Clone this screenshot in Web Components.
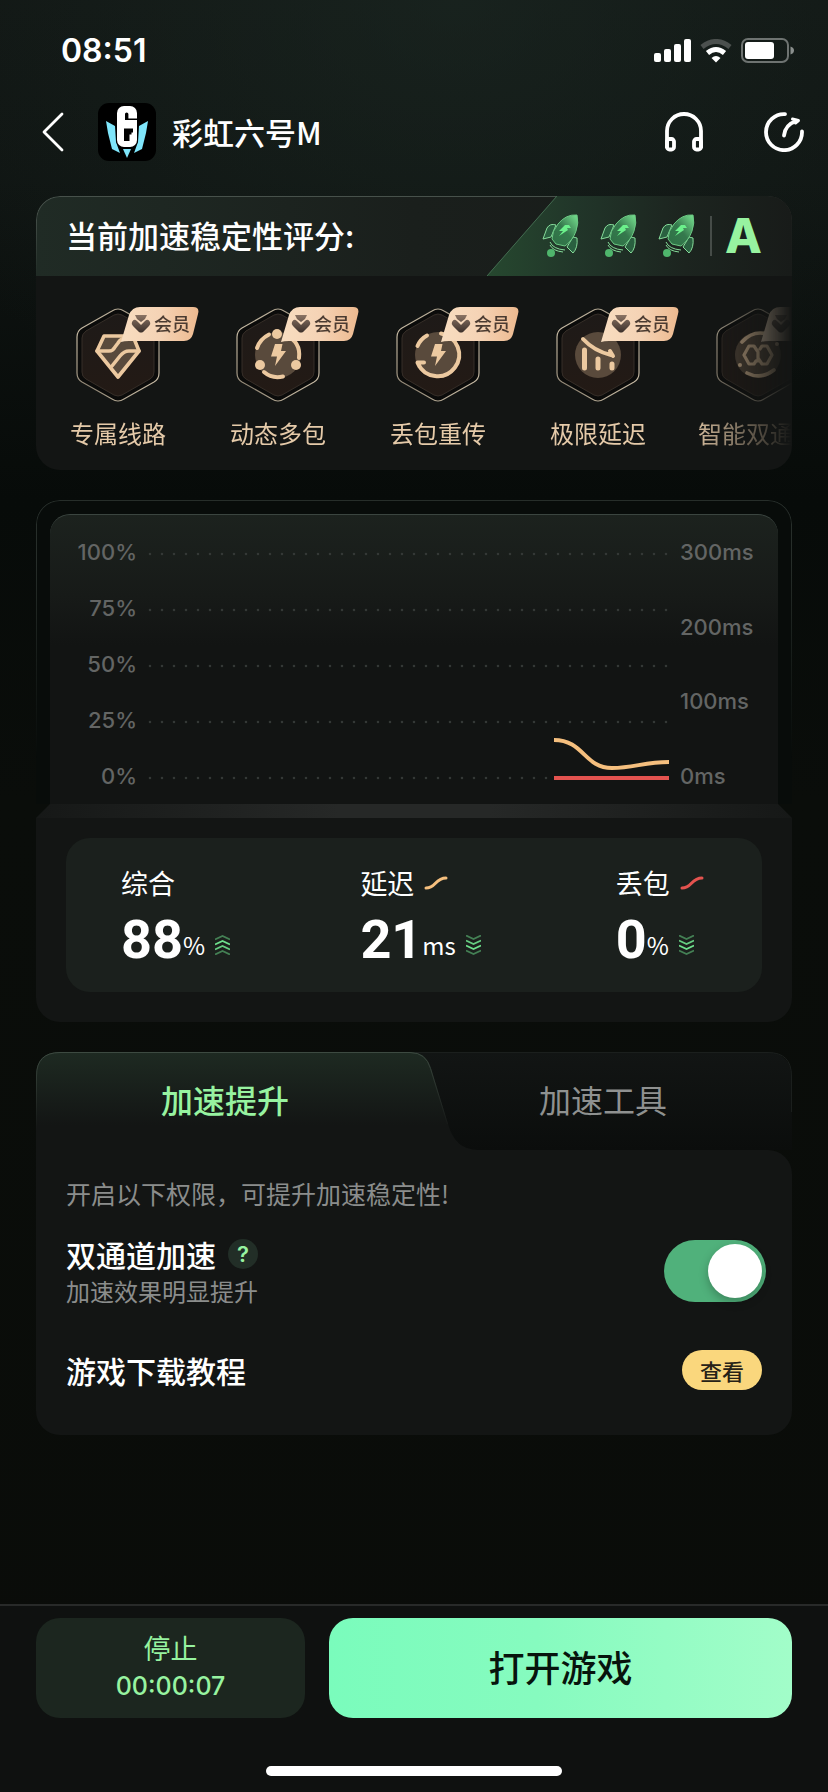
<!DOCTYPE html>
<html lang="zh-CN">
<head>
<meta charset="utf-8">
<meta name="viewport" content="width=device-width, initial-scale=1">
<title>彩虹六号M</title>
<style>
    :root {
        --cjk: "Noto Sans CJK SC", "Noto Sans", sans-serif;
        --latin: Inter, "Noto Sans CJK SC", sans-serif;
        --surface: #131514;
        --surface-raised: #1b201d;
        --green: #97f3a0;
        --gold: #ecc9a0;
        --muted: #8b8d8c;
        --radius: 24px;
        --side: 36px;
    }
    * { box-sizing: border-box; }
    body {
        margin: 0;
        min-height: 100vh;
        display: flex;
        flex-direction: column;
        font-family: var(--cjk);
        color: #fff;
        background:
            radial-gradient(ellipse 75% 460px at 55% 0, rgba(30, 44, 38, 0.55), rgba(30, 44, 38, 0) 100%),
            linear-gradient(#111614 0, #0f1412 180px, #070b09 500px, #0a0d0a 800px, #0a0c09 100%);
    }
    main {
        display: flex;
        flex-direction: column;
        gap: 30px;
        padding: 20px var(--side) 40px;
    }
    bottom-bar { margin-top: auto; }
</style>
</head>
<body>
    <status-bar time="08:51"></status-bar>
    <app-header>彩虹六号M</app-header>
    <main>
        <score-card heading="当前加速稳定性评分:" grade="A" rockets="3">
            <perk-item icon="gem">专属线路</perk-item>
            <perk-item icon="multi">动态多包</perk-item>
            <perk-item icon="resend">丢包重传</perk-item>
            <perk-item icon="drop">极限延迟</perk-item>
            <perk-item icon="link">智能双通道</perk-item>
        </score-card>
        <network-card>
            <latency-chart></latency-chart>
            <stat-item slot="stats" value="88" unit="%" trend="up">综合</stat-item>
            <stat-item slot="stats" value="21" unit="ms" trend="down" line="#f5bf7e">延迟</stat-item>
            <stat-item slot="stats" value="0" unit="%" trend="down" line="#e4534f">丢包</stat-item>
        </network-card>
        <boost-tabs first="加速提升" second="加速工具">
            <p>开启以下权限，可提升加速稳定性!</p>
            <setting-row kind="switch" heading="双通道加速" sub="加速效果明显提升"></setting-row>
            <setting-row kind="action" heading="游戏下载教程" action="查看"></setting-row>
        </boost-tabs>
    </main>
    <bottom-bar elapsed="00:00:07" stop="停止">打开游戏</bottom-bar>

<script>
const BASE = `
    * { box-sizing: border-box; }
    button { font: inherit; color: inherit; background: none; border: 0; padding: 0; margin: 0; cursor: pointer; }
    svg { display: block; }
`;

class BaseElement extends HTMLElement {
    constructor() {
        super();
        this.attachShadow({ mode: 'open' });
    }

    connectedCallback() {
        this.shadowRoot.innerHTML = `<style>${BASE}${this.styles()}</style>${this.markup()}`;
    }

    attr(name) { return this.getAttribute(name) || ''; }
    styles() { return ''; }
    markup() { return '<slot></slot>'; }
}

class StatusBar extends BaseElement {
    styles() {
        return `
            :host { display: flex; align-items: center; justify-content: space-between; height: 88px; padding: 13px 34px 0 61px; }
            .time { font: 600 32px/40px var(--latin); }
            .icons { display: flex; align-items: center; gap: 9px; }
        `;
    }

    markup() {
        return `
            <span class="time">${this.attr('time')}</span>
            <div class="icons">
                <svg width="37" height="24" viewBox="0 0 37 24" fill="#fff">
                    <rect x="0" y="14" width="7" height="9" rx="2"/><rect x="10" y="10" width="7" height="13" rx="2"/>
                    <rect x="20" y="5" width="7" height="18" rx="2"/><rect x="30" y="0" width="7" height="23" rx="2"/>
                </svg>
                <svg width="32" height="24" viewBox="0 0 32 24" fill="none" stroke-width="5">
                    <path d="M2 8Q16-3 30 8" stroke="#4b504e"/>
                    <path d="M7.500 14Q16 7 24.500 14" stroke="#fff"/>
                    <path d="M11.500 19Q16 15 20.500 19L16 23.500Z" fill="#fff"/>
                </svg>
                <svg width="53" height="26" viewBox="0 0 53 26">
                    <rect x="1" y="1" width="46" height="23" rx="6" fill="none" stroke="#6e7371" stroke-width="2"/>
                    <rect x="4" y="4" width="29" height="17" rx="3" fill="#fff"/>
                    <path d="M49.500 8.500q3.500 1.200 3.500 4t-3.500 4z" fill="#8a8f8d"/>
                </svg>
            </div>
        `;
    }
}

class AppHeader extends BaseElement {
    styles() {
        return `
            :host { display: flex; align-items: center; height: 88px; padding: 0 24px 0 42px; }
            .back { width: 22px; margin-right: 34px; }
            h1 { flex: 1; margin: 0 0 0 16px; font-size: 31px; line-height: 44px; font-weight: 500; }
            .tools { display: flex; gap: 60px; }
        `;
    }

    markup() {
        return `
            <button class="back" aria-label="返回">
                <svg width="22" height="40" viewBox="0 0 22 40" fill="none" stroke="#fff" stroke-width="2.800" stroke-linecap="round" stroke-linejoin="round"><path d="M20 2 2 20l18 18"/></svg>
            </button>
            <svg width="58" height="58" viewBox="0 0 58 58">
                <rect width="58" height="58" rx="11" fill="#000"/>
                <g fill="#7fe6fb">
                    <path d="M8 18l9 5 1 16 4 11-8-4-4-16z"/><path d="M50 18l-9 5-1 16-4 11 8-4 4-16z"/><path d="M25 46h8l-4 9z"/>
                </g>
                <rect x="18" y="2" width="22" height="43" rx="8" fill="#000"/>
                <rect x="19" y="3" width="20" height="41" rx="7" fill="#fff"/>
                <path d="M27 11q0-1.500 1.700-1.500t1.700 1.500v4.500H39v1.600h-8.600H27zM26 25.500h9v4h-1.500v2h-2v6.500H26z" fill="#000"/>
            </svg>
            <h1><slot></slot></h1>
            <div class="tools">
                <button aria-label="客服">
                    <svg width="40" height="40" viewBox="0 0 40 40" fill="none" stroke="#fff" stroke-width="3.800">
                        <path d="M3 36V19a17 17 0 0 1 34 0v17"/>
                        <rect x="3" y="27" width="7" height="10.500" rx="2.500"/><rect x="30" y="27" width="7" height="10.500" rx="2.500"/>
                    </svg>
                </button>
                <button aria-label="测速">
                    <svg width="40" height="40" viewBox="0 0 40 40" fill="none" stroke="#fff" stroke-width="3.800" stroke-linecap="round" stroke-linejoin="round">
                        <path d="M21 2.200A18 18 0 1 0 38 19.500"/>
                        <path d="M20 23.500Q21 13 32 9"/><path d="M28.500 7l6 1.500-3 2.500" stroke-width="3"/>
                    </svg>
                </button>
            </div>
        `;
    }
}

const ROCKET = `
    <svg width="38" height="46" viewBox="0 0 38 46" stroke="#86dc9a" stroke-width="1" stroke-linejoin="round">
        <path d="M14 12Q8 10 5 15L1 26l8-2zM25 34l6 6q5-5 4-15l-4-1z" fill="#2a6040"/>
        <path d="M35 2Q24 1 16 11 10 18 10 26l4 5 9 2q8-6 11-15 3-8 1-16z" fill="url(#body)" stroke="#6cc984"/>
        <path d="M8 29q3 7 15 8M8 32q3 6 13 7" fill="none"/>
        <circle cx="9" cy="40" r="4" fill="#4fb56c" stroke="none"/>
        <path d="M23 12l-6 6h4l-4 5 9-6-1-2h4l-2-3z" fill="#6bf08b" stroke="none"/>
    </svg>
`;

class ScoreCard extends BaseElement {
    styles() {
        return `
            :host { display: block; border-radius: var(--radius); background: var(--surface); overflow: hidden; }
            header {
                position: relative; display: flex; align-items: stretch; height: 80px;
                background: linear-gradient(90deg, #202b25 0, #1a1f1c 50%, #181b19 100%);
            }
            header::before {
                content: ""; position: absolute; inset: 0; border: 1px solid #47514b; border-bottom: 0;
                border-radius: var(--radius) var(--radius) 0 0; -webkit-mask-image: linear-gradient(#000 20%, transparent);
            }
            h2 { flex: 1; margin: 0; padding-left: 30px; font-size: 31px; line-height: 78px; font-weight: 500; }
            .grade { position: relative; display: flex; align-items: center; gap: 20px; padding: 0 30px 0 55px; }
            .slant { position: absolute; top: 0; left: 0; width: 100%; height: 100%; }
            .rockets, .grade b { position: relative; }
            .rockets { display: flex; gap: 20px; }
            .bar { position: relative; width: 2px; height: 40px; margin-left: -6px; background: #464c48; }
            .grade b { margin-left: -7px; font: 800 48px/80px var(--latin); color: var(--green); }
            .perks {
                display: flex; gap: 56px; padding: 32px 30px 20px; overflow: hidden;
                -webkit-mask-image: linear-gradient(90deg, #000 calc(100% - 104px), transparent 100%);
            }
            svg.defs { position: absolute; width: 0; height: 0; }
        `;
    }

    markup() {
        const rockets = ROCKET.repeat(Number(this.attr('rockets')));
        return `
            <svg class="defs"><defs>
                <linearGradient id="body" x1="1" y1="0" x2="0" y2="1">
                    <stop offset="0" stop-color="#78e391"/><stop offset=".5" stop-color="#35794d"/><stop offset="1" stop-color="#2e7045"/>
                </linearGradient>
            </defs></svg>
            <header>
                <h2>${this.attr('heading')}</h2>
                <div class="grade">
                    <svg class="slant" viewBox="0 0 305 80" preserveAspectRatio="none">
                        <defs><linearGradient id="slant">
                            <stop offset="0" stop-color="#26482f"/><stop offset=".3" stop-color="#213529"/>
                            <stop offset=".65" stop-color="#1c241f"/><stop offset="1" stop-color="#181b19"/>
                        </linearGradient></defs>
                        <path d="M70 0H305V80H0z" fill="url(#slant)"/><path d="M70 0 0 80" stroke="#436c50"/>
                    </svg>
                    <div class="rockets">${rockets}</div>
                    <span class="bar"></span>
                    <b>${this.attr('grade')}</b>
                </div>
            </header>
            <div class="perks"><slot></slot></div>
        `;
    }
}

// glyphs drawn inside the 84x94 hexagon, centred on 42,47
const DISC = '<circle cx="42" cy="47" r="23" fill="#594a3c" stroke="none"/>';
const BOLT = '<path d="M39 36h7.500l-1.500 7h5L39 58l2-9.500h-6z" fill="#ecc9a0" stroke="none"/>';
const PERK_ICONS = {
    gem: `
        <path d="M28 28h29l6 15-21 26-21-26z" fill="#594a3c" stroke-width="3.600"/>
        <path d="M21 43h12q4 0 6-4l3-4q3-5 8-5M36 58l8-10q4-5 9-5h10" stroke-width="3.600"/>
    `,
    multi: `${DISC}${BOLT}
        <path d="M21 40q3-9 12-13.500M50 27.500Q65 34 63 50M28 64q8 7 19 4.500" stroke-width="4"/>
        <g fill="#ecc9a0" stroke="none"><circle cx="41" cy="26" r="5"/><circle cx="60" cy="57" r="5"/><circle cx="24" cy="57" r="5"/></g>
    `,
    resend: `${DISC}${BOLT}
        <path d="M21.500 38q3-7 9.500-10.500M45 25.500a21.500 21.500 0 1 1-23 30M28 54.500h-6.500l2 4" stroke-width="4"/>
    `,
    drop: `${DISC}
        <path d="M28.500 42v18M42 51v9M56 56v4" stroke-width="5"/>
        <path d="M27 31q11 12 28 16M54 43l3 5" stroke-width="4"/>
    `,
    link: `${DISC}
        <path d="M26 34q11-12 25-8M31 65q14 7 27-3" stroke-width="3.600"/>
        <path d="M40 53l-2 3h-5l-5-9 5-9h5l4 6v9M44 41l2-3h5l5 9-5 9h-5l-4-6v-6" stroke-width="3.200"/>
        <g fill="#ecc9a0" stroke="none"><circle cx="61" cy="36" r="2"/><circle cx="24" cy="57" r="2"/></g>
    `
};

class PerkItem extends BaseElement {
    styles() {
        return `
            :host { display: flex; flex: none; flex-direction: column; align-items: center; gap: 14px; width: 104px; }
            .icon { position: relative; width: 84px; height: 94px; }
            .badge { position: absolute; left: 45px; top: -1px; width: 78px; height: 35px; padding-left: 33px; font-size: 18px; line-height: 32px; font-weight: 500; color: #4b3b31; }
            .badge svg { position: absolute; left: 0; top: 0; }
            .badge span { position: relative; }
            .label { font-size: 24px; line-height: 34px; white-space: nowrap; color: #e5caa9; }
        `;
    }

    markup() {
        return `
            <div class="icon">
                <svg width="84" height="94" viewBox="0 0 84 94" fill="none">
                    <defs>
                        <linearGradient id="rim" x2="1" y2="1"><stop offset="0" stop-color="#d9ccb4"/><stop offset=".5" stop-color="#8c8271"/><stop offset="1" stop-color="#d9ccb4"/></linearGradient>
                        <linearGradient id="core" x2="0" y2="1"><stop offset="0" stop-color="#1e1a18"/><stop offset="1" stop-color="#231a15"/></linearGradient>
                    </defs>
                    <path d="M36 3q6-4 12 0l30 17q5 3 5 9v36q0 6-5 9L48 91q-6 4-12 0L6 74q-5-3-5-9V29q0-6 5-9z" fill="#0b0b0a" stroke="url(#rim)" stroke-width="1.200"/>
                    <path d="M38 7q4-2 8 0l28 16q4 3 4 7v34q0 5-4 7L46 87q-4 2-8 0L10 71q-4-2-4-7V30q0-4 4-7z" fill="url(#core)" stroke="#362e28"/>
                    <g stroke="#ecc9a0" stroke-linecap="round" stroke-linejoin="round">${PERK_ICONS[this.attr('icon')]}</g>
                </svg>
                <div class="badge">
                    <svg width="78" height="35" viewBox="0 0 78 35">
                        <defs>
                            <linearGradient id="plate"><stop offset="0" stop-color="#f8ddc0"/><stop offset=".5" stop-color="#f5d3b5"/><stop offset="1" stop-color="#edb98f"/></linearGradient>
                            <linearGradient id="vee" x2="0" y2="1"><stop offset="0" stop-color="#8b7464"/><stop offset="1" stop-color="#3c302b"/></linearGradient>
                        </defs>
                        <path d="M0 35 8 8Q11 0 19 0h53q7 0 5 7l-5 20q-2 7-9 7H8Q3 34 0 35z" fill="url(#plate)"/>
                        <path d="M14 8h12l-2 4-4 3-4-3zM11 15q2-4 5-1l4 4 4-4q3-3 5 1 1 2-1 4l-6 6q-2 1-4 0l-6-6q-2-2-1-4z" fill="url(#vee)"/>
                    </svg>
                    <span>会员</span>
                </div>
            </div>
            <span class="label"><slot></slot></span>
        `;
    }
}

class NetworkCard extends BaseElement {
    styles() {
        return `
            :host { display: block; }
            .frame { position: relative; padding: 14px 14px 0; background: #080c0a; border-radius: var(--radius) var(--radius) 0 0; }
            .frame::before {
                content: ""; position: absolute; inset: 0; border: 1px solid #272e2a; border-bottom: 0;
                border-radius: var(--radius) var(--radius) 0 0; -webkit-mask-image: linear-gradient(#000 20%, transparent 85%);
            }
            .bevel {
                height: 14px; background: linear-gradient(90deg, #161817, #262827 40%, #262827 60%, #161817);
                clip-path: polygon(14px 0, calc(100% - 14px) 0, 100% 100%, 0 100%);
            }
            .body { padding: 20px 30px 30px; background: var(--surface); border-radius: 0 0 var(--radius) var(--radius); }
            .stats {
                display: grid; grid-template-columns: 239fr 255fr 118fr; padding: 27px 28px 27px 55px;
                background: var(--surface-raised); border-radius: var(--radius);
            }
        `;
    }

    markup() {
        return `
            <div class="frame"><slot></slot></div>
            <div class="bevel"></div>
            <div class="body"><div class="stats"><slot name="stats"></slot></div></div>
        `;
    }
}

class LatencyChart extends BaseElement {
    styles() {
        return `
            :host {
                display: grid; grid-template-columns: 87px 1fr 109px; height: 290px; padding: 23px 0 14px;
                border-radius: 20px 20px 0 0; border-top: 1px solid #3b4540;
                background: linear-gradient(#1c221e, #171a18 28%, #121413 45%);
                font: 500 22px/28px var(--latin); color: #636564;
            }
            .axis { display: flex; flex-direction: column; justify-content: space-between; }
            .left { text-align: right; }
            .plot { width: 100%; height: 252px; padding-left: 7px; }
            .right { padding-left: 11px; }
        `;
    }

    markup() {
        const left = ['100%', '75%', '50%', '25%', '0%'];
        const right = ['300ms', '200ms', '100ms', '0ms'];
        const dots = left.map((_, i) => `<path d="M6 ${16 + i * 56}H524" stroke="#343836" stroke-width="2.600" stroke-dasharray="0 12"/>`);
        return `
            <div class="axis left">${left.map(t => `<span>${t}</span>`).join('')}</div>
            <svg class="plot" viewBox="0 0 525 252" preserveAspectRatio="xMaxYMid meet" fill="none" overflow="visible">
                <g stroke-linecap="round">${dots.join('')}</g>
                <path d="M410 240H525" stroke="#e4534f" stroke-width="4"/>
                <path d="M410 202C440 202 440 230 468 230C490 230 500 224 525 224" stroke="#f5bf7e" stroke-width="4"/>
            </svg>
            <div class="axis right">${right.map(t => `<span>${t}</span>`).join('')}</div>
        `;
    }
}

class StatItem extends BaseElement {
    styles() {
        return `
            :host { display: flex; flex-direction: column; gap: 14px; }
            .name { display: flex; align-items: center; gap: 10px; font-size: 27px; line-height: 36px; }
            .value { display: flex; align-items: flex-end; }
            b { font: 700 54px/50px Roboto, var(--cjk); }
            .unit { font-size: 24px; line-height: 40px; }
            .trend { margin: 0 0 10px 10px; }
            .down { transform: scaleY(-1); }
        `;
    }

    markup() {
        const line = this.attr('line');
        const mark = line ? `<svg width="24" height="16" viewBox="0 0 24 16" fill="none" stroke="${line}" stroke-width="3" stroke-linecap="round"><path d="M2 13c10 0 9-10 20-10"/></svg>` : '';
        return `
            <div class="name"><slot></slot>${mark}</div>
            <div class="value">
                <b>${this.attr('value')}</b><span class="unit">${this.attr('unit')}</span>
                <svg class="trend ${this.attr('trend')}" width="15" height="20" viewBox="0 0 15 20" fill="none" stroke="#6ee08c" stroke-width="1.800">
                    <path d="M0 4.500 7.500 1 15 4.500" opacity=".5"/><path d="M0 9.500 7.500 6 15 9.500"/>
                    <path d="M0 14.500 7.500 11 15 14.500" opacity=".9"/><path d="M0 19.500 7.500 16 15 19.500" opacity=".5"/>
                </svg>
            </div>
        `;
    }
}

class BoostTabs extends BaseElement {
    styles() {
        return `
            :host { display: block; }
            .tabs { position: relative; display: flex; background: linear-gradient(#121514, #0b0d0c); border-radius: var(--radius) var(--radius) 0 0; }
            .shape { position: absolute; width: 100%; height: 100%; }
            button { position: relative; flex: 1; height: 98px; padding-bottom: 4px; font-size: 32px; line-height: 48px; color: #8f9190; }
            button[aria-selected=true] { font-weight: 500; color: var(--green); }
            .panel {
                display: flex; flex-direction: column; padding: 26px 26px 45px 30px;
                background: var(--surface); border-radius: 0 var(--radius) var(--radius) var(--radius);
            }
            ::slotted(p) { margin: 0 0 24px; font-size: 25px; line-height: 34px; color: var(--muted); }
            ::slotted(setting-row:last-child) { margin-top: 42px; }
        `;
    }

    markup() {
        return `
            <div class="tabs" role="tablist">
                <svg class="shape" viewBox="0 0 756 98" preserveAspectRatio="none" fill="none">
                    <defs>
                        <linearGradient id="tab" x2="0" y2="1"><stop offset="0" stop-color="#1e2a22"/><stop offset=".75" stop-color="#131514"/></linearGradient>
                        <linearGradient id="edge" x2="0" y2="1"><stop offset="0" stop-color="#3d4a41"/><stop offset=".8" stop-color="#131514"/></linearGradient>
                    </defs>
                    <path d="M380 .5H732Q755.500 .5 755.500 24V60" stroke="#1b1f1d"/>
                    <path d="M0 98V24Q0 0 24 0H374q16 0 21 16L412 72q7 26 30 26z" fill="url(#tab)"/>
                    <path d="M.5 98V24Q.5 .5 24 .5H374q16 0 20.500 16L411.500 72" stroke="url(#edge)"/>
                </svg>
                <button role="tab" aria-selected="true">${this.attr('first')}</button>
                <button role="tab" aria-selected="false">${this.attr('second')}</button>
            </div>
            <div class="panel" role="tabpanel"><slot></slot></div>
        `;
    }
}

class SettingRow extends BaseElement {
    styles() {
        return `
            :host { display: flex; align-items: center; justify-content: space-between; }
            .title { display: flex; align-items: center; gap: 12px; font-size: 30px; line-height: 40px; font-weight: 500; }
            .sub { font-size: 24px; line-height: 34px; color: var(--muted); }
            .help { width: 30px; height: 30px; border-radius: 50%; background: #222e27; font: 600 22px/30px var(--latin); color: var(--green); }
            input { appearance: none; position: relative; width: 102px; height: 62px; margin: 0; border-radius: 31px; background: #3a3d3b; cursor: pointer; }
            input::before { content: ""; position: absolute; left: 4px; top: 4px; width: 54px; height: 54px; border-radius: 50%; background: #fff; box-shadow: 0 4px 10px rgba(0, 0, 0, 0.25); }
            input:checked { background: #50b17b; }
            input:checked::before { left: 44px; }
            .action { width: 80px; height: 40px; margin-right: 4px; border-radius: 20px; background: #fad77d; font-size: 22px; line-height: 38px; font-weight: 500; color: #272217; }
        `;
    }

    markup() {
        if (this.attr('kind') === 'switch') {
            return `
                <div>
                    <div class="title"><label for="toggle">${this.attr('heading')}</label><button class="help" aria-label="说明">?</button></div>
                    <div class="sub">${this.attr('sub')}</div>
                </div>
                <input id="toggle" type="checkbox" role="switch" checked>
            `;
        }
        return `
            <div class="title" id="name">${this.attr('heading')}</div>
            <button class="action" aria-describedby="name">${this.attr('action')}</button>
        `;
    }
}

class BottomBar extends BaseElement {
    styles() {
        return `
            :host { display: block; border-top: 2px solid #282a29; background: #0f1110; }
            .actions { display: flex; gap: 24px; padding: 12px var(--side) 48px; }
            button { height: 100px; border-radius: var(--radius); }
            .stop { flex: 269; display: flex; flex-direction: column; align-items: center; justify-content: center; background: #1c261f; font-size: 27px; line-height: 36px; color: var(--green); }
            .stop time { font: 500 25px/40px var(--latin); }
            .open { flex: 463; padding-bottom: 4px; background: linear-gradient(90deg, #7afcbc, #86fbbf 45%, #a2fdc9); font-size: 36px; font-weight: 500; color: #07140d; }
            .home { width: 296px; height: 10px; margin: 0 auto 16px; border-radius: 5px; background: #fff; }
        `;
    }

    markup() {
        return `
            <div class="actions">
                <button class="stop"><span>${this.attr('stop')}</span><time>${this.attr('elapsed')}</time></button>
                <button class="open"><slot></slot></button>
            </div>
            <div class="home"></div>
        `;
    }
}

customElements.define('status-bar', StatusBar);
customElements.define('app-header', AppHeader);
customElements.define('score-card', ScoreCard);
customElements.define('perk-item', PerkItem);
customElements.define('network-card', NetworkCard);
customElements.define('latency-chart', LatencyChart);
customElements.define('stat-item', StatItem);
customElements.define('boost-tabs', BoostTabs);
customElements.define('setting-row', SettingRow);
customElements.define('bottom-bar', BottomBar);
</script>
</body>
</html>
